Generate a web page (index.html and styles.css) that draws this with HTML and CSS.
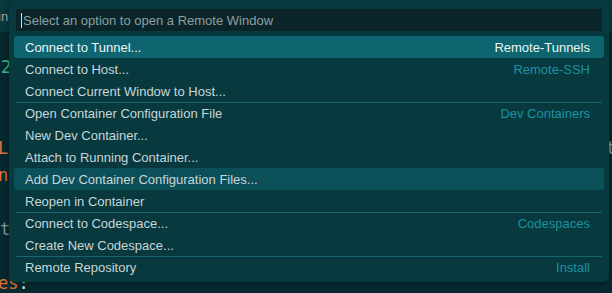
FILE: index.html
```html
<!DOCTYPE html>
<html>
<head>
    <meta charset="UTF-8">
    <title>Remote Window</title>
    <link rel="stylesheet" href="styles.css">
</head>
<body>
    <div class="editor">
        <div class="tabs"><span class="tab-text">in</span></div>
        <div class="code">
            <div class="line"><span class="num">2</span></div>
            <div class="line"></div>
            <div class="line"></div>
            <div class="line"><span class="orange">Lr</span><span class="far">t</span></div>
            <div class="line"><span class="orange">ne</span></div>
            <div class="line"></div>
            <div class="line"><span class="gray">t</span></div>
            <div class="line"></div>
            <div class="line"><span class="orange">es</span><span class="white">:</span></div>
        </div>
    </div>

    <div class="quick-pick">
        <div class="input-box">
            <span class="cursor"></span><span class="placeholder">Select an option to open a Remote Window</span>
        </div>
        <div class="list">
            <div class="row selected">
                <span class="label">Connect to Tunnel...</span>
                <span class="desc">Remote-Tunnels</span>
            </div>
            <div class="row">
                <span class="label">Connect to Host...</span>
                <span class="desc">Remote-SSH</span>
            </div>
            <div class="row">
                <span class="label">Connect Current Window to Host...</span>
            </div>
            <div class="row sep">
                <span class="label">Open Container Configuration File</span>
                <span class="desc">Dev Containers</span>
            </div>
            <div class="row">
                <span class="label">New Dev Container...</span>
            </div>
            <div class="row">
                <span class="label">Attach to Running Container...</span>
            </div>
            <div class="row hovered">
                <span class="label">Add Dev Container Configuration Files...</span>
            </div>
            <div class="row">
                <span class="label">Reopen in Container</span>
            </div>
            <div class="row sep">
                <span class="label">Connect to Codespace...</span>
                <span class="desc">Codespaces</span>
            </div>
            <div class="row">
                <span class="label">Create New Codespace...</span>
            </div>
            <div class="row sep">
                <span class="label">Remote Repository</span>
                <span class="desc">Install</span>
            </div>
        </div>
    </div>
</body>
</html>
```

FILE: styles.css
```css
body {
    margin: 0;
    width: 612px;
    height: 293px;
    overflow: hidden;
    position: relative;
    background-color: #062a2f;
    font-family: "Liberation Sans", Arial, sans-serif;
}
.tabs {
    height: 32px;
    background-color: #0a3a40;
    display: flex;
    align-items: center;
}
.tab-text {
    color: #9fb0b2;
    font-size: 13px;
    margin-left: -2px;
}
.code {
    padding-top: 22px;
    font-family: "DejaVu Sans Mono", monospace;
    font-size: 17px;
}
.line {
    height: 27px;
    line-height: 27px;
    display: flex;
    white-space: pre;
}
.num {
    color: #3fc18f;
    margin-left: 1px;
}
.orange {
    color: #e0743c;
    margin-left: -2px;
}
.gray {
    color: #7f9ea3;
}
.white {
    color: #d8e2e3;
}
.far {
    color: #8fa1a3;
    margin-left: auto;
    margin-right: -4px;
}
.quick-pick {
    position: absolute;
    left: 9px;
    top: 0;
    width: 600px;
    height: 282px;
    box-sizing: border-box;
    padding: 9px 5px 0 5px;
    background-color: #07393f;
    border-radius: 6px;
    box-shadow: 0 0 8px rgba(0, 0, 0, 0.45);
}
.input-box {
    height: 22px;
    margin: 0 2px 5px 2px;
    background-color: #0a2529;
    display: flex;
    align-items: center;
    padding-left: 5px;
    font-size: 13px;
}
.cursor {
    width: 1px;
    height: 15px;
    background-color: #d6e0e2;
    margin-right: 1px;
}
.placeholder {
    color: #8ba0a3;
}
.list {
    display: flex;
    flex-direction: column;
}
.row {
    height: 22px;
    box-sizing: border-box;
    display: flex;
    align-items: center;
    justify-content: space-between;
    padding: 0 14px 0 11px;
    font-size: 13px;
    border-radius: 3px;
}
.row.sep {
    border-top: 1px solid #13666f;
    border-radius: 0;
    margin: 0 2px;
    padding: 0 12px 0 9px;
}
.label {
    color: #c8d6d8;
}
.desc {
    color: #1a93a1;
}
.selected {
    background-color: #0e6570;
}
.selected .label,
.selected .desc {
    color: #eef4f4;
}
.hovered {
    background-color: #0b4f58;
}
```
